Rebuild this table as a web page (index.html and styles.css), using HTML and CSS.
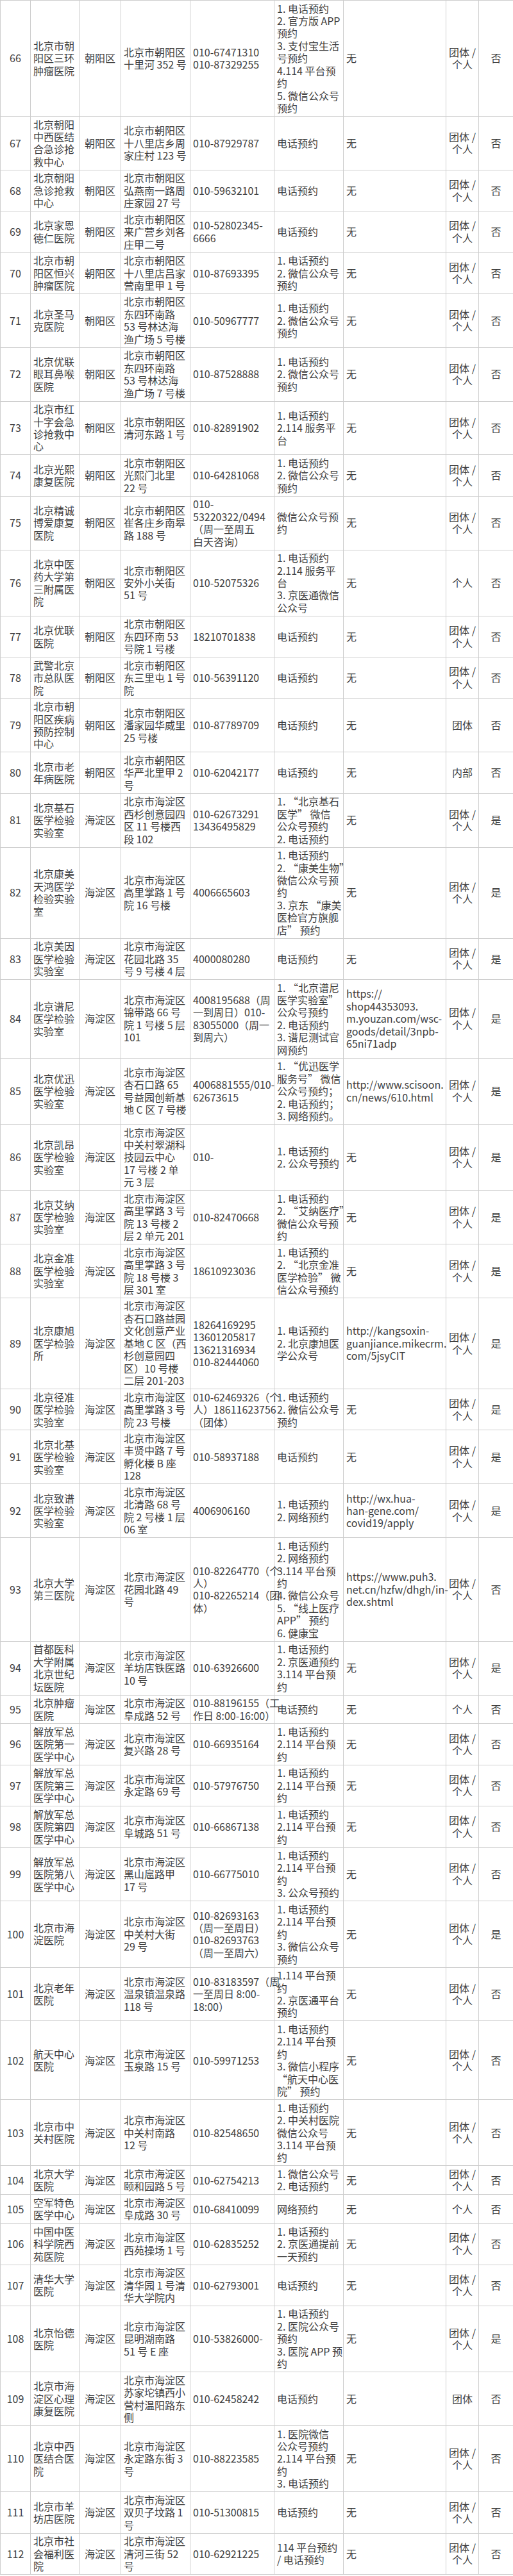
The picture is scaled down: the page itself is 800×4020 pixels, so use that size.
FILE: index.html
```html
<!DOCTYPE html>
<html lang="zh-CN">
<head>
<meta charset="utf-8">
<title>核酸检测机构列表</title>
<link rel="stylesheet" href="styles.css">
</head>
<body>
<table class="tbl">
<colgroup>
<col class="w-no"><col class="w-name"><col class="w-dist"><col class="w-addr"><col class="w-tel"><col class="w-book"><col class="w-web"><col class="w-grp"><col class="w-yn">
</colgroup>
<tbody>
<tr><td class="c">66</td><td>北京市朝<br>阳区三环<br>肿瘤医院</td><td class="c">朝阳区</td><td>北京市朝阳区<br>十里河 352 号</td><td>010-67471310<br>010-87329255</td><td>1. 电话预约<br>2. 官方版 APP<br>预约<br>3. 支付宝生活<br>号预约<br>4.114 平台预<br>约<br>5. 微信公众号<br>预约</td><td>无</td><td class="c">团体 /<br>个人</td><td class="c">否</td></tr>
<tr><td class="c">67</td><td>北京朝阳<br>中西医结<br>合急诊抢<br>救中心</td><td class="c">朝阳区</td><td>北京市朝阳区<br>十八里店乡周<br>家庄村 123 号</td><td>010-87929787</td><td>电话预约</td><td>无</td><td class="c">团体 /<br>个人</td><td class="c">否</td></tr>
<tr><td class="c">68</td><td>北京朝阳<br>急诊抢救<br>中心</td><td class="c">朝阳区</td><td>北京市朝阳区<br>弘燕南一路周<br>庄家园 27 号</td><td>010-59632101</td><td>电话预约</td><td>无</td><td class="c">团体 /<br>个人</td><td class="c">否</td></tr>
<tr><td class="c">69</td><td>北京家恩<br>德仁医院</td><td class="c">朝阳区</td><td>北京市朝阳区<br>来广营乡刘各<br>庄甲二号</td><td>010-52802345-<br>6666</td><td>电话预约</td><td>无</td><td class="c">团体 /<br>个人</td><td class="c">否</td></tr>
<tr><td class="c">70</td><td>北京市朝<br>阳区恒兴<br>肿瘤医院</td><td class="c">朝阳区</td><td>北京市朝阳区<br>十八里店吕家<br>营南里甲 1 号</td><td>010-87693395</td><td>1. 电话预约<br>2. 微信公众号<br>预约</td><td>无</td><td class="c">团体 /<br>个人</td><td class="c">否</td></tr>
<tr><td class="c">71</td><td>北京圣马<br>克医院</td><td class="c">朝阳区</td><td>北京市朝阳区<br>东四环南路<br>53 号林达海<br>渔广场 5 号楼</td><td>010-50967777</td><td>1. 电话预约<br>2. 微信公众号<br>预约</td><td>无</td><td class="c">团体 /<br>个人</td><td class="c">否</td></tr>
<tr><td class="c">72</td><td>北京优联<br>眼耳鼻喉<br>医院</td><td class="c">朝阳区</td><td>北京市朝阳区<br>东四环南路<br>53 号林达海<br>渔广场 7 号楼</td><td>010-87528888</td><td>1. 电话预约<br>2. 微信公众号<br>预约</td><td>无</td><td class="c">团体 /<br>个人</td><td class="c">否</td></tr>
<tr><td class="c">73</td><td>北京市红<br>十字会急<br>诊抢救中<br>心</td><td class="c">朝阳区</td><td>北京市朝阳区<br>清河东路 1 号</td><td>010-82891902</td><td>1. 电话预约<br>2.114 服务平<br>台</td><td>无</td><td class="c">团体 /<br>个人</td><td class="c">否</td></tr>
<tr><td class="c">74</td><td>北京光熙<br>康复医院</td><td class="c">朝阳区</td><td>北京市朝阳区<br>光熙门北里<br>22 号</td><td>010-64281068</td><td>1. 电话预约<br>2. 微信公众号<br>预约</td><td>无</td><td class="c">团体 /<br>个人</td><td class="c">否</td></tr>
<tr><td class="c">75</td><td>北京精诚<br>博爱康复<br>医院</td><td class="c">朝阳区</td><td>北京市朝阳区<br>崔各庄乡南皋<br>路 188 号</td><td>010-<br>53220322/0494<br>（周一至周五<br>白天咨询）</td><td>微信公众号预<br>约</td><td>无</td><td class="c">团体 /<br>个人</td><td class="c">否</td></tr>
<tr><td class="c">76</td><td>北京中医<br>药大学第<br>三附属医<br>院</td><td class="c">朝阳区</td><td>北京市朝阳区<br>安外小关街<br>51 号</td><td>010-52075326</td><td>1. 电话预约<br>2.114 服务平<br>台<br>3. 京医通微信<br>公众号</td><td>无</td><td class="c">个人</td><td class="c">否</td></tr>
<tr><td class="c">77</td><td>北京优联<br>医院</td><td class="c">朝阳区</td><td>北京市朝阳区<br>东四环南 53<br>号院 1 号楼</td><td>18210701838</td><td>电话预约</td><td>无</td><td class="c">团体 /<br>个人</td><td class="c">否</td></tr>
<tr><td class="c">78</td><td>武警北京<br>市总队医<br>院</td><td class="c">朝阳区</td><td>北京市朝阳区<br>东三里屯 1 号<br>院</td><td>010-56391120</td><td>电话预约</td><td>无</td><td class="c">团体 /<br>个人</td><td class="c">否</td></tr>
<tr><td class="c">79</td><td>北京市朝<br>阳区疾病<br>预防控制<br>中心</td><td class="c">朝阳区</td><td>北京市朝阳区<br>潘家园华威里<br>25 号楼</td><td>010-87789709</td><td>电话预约</td><td>无</td><td class="c">团体</td><td class="c">否</td></tr>
<tr><td class="c">80</td><td>北京市老<br>年病医院</td><td class="c">朝阳区</td><td>北京市朝阳区<br>华严北里甲 2<br>号</td><td>010-62042177</td><td>电话预约</td><td>无</td><td class="c">内部</td><td class="c">否</td></tr>
<tr><td class="c">81</td><td>北京基石<br>医学检验<br>实验室</td><td class="c">海淀区</td><td>北京市海淀区<br>西杉创意园四<br>区 11 号楼西<br>段 102</td><td>010-62673291<br>13436495829</td><td>1. “北京基石<br>医学” 微信<br>公众号预约<br>2. 电话预约</td><td>无</td><td class="c">团体 /<br>个人</td><td class="c">是</td></tr>
<tr><td class="c">82</td><td>北京康美<br>天鸿医学<br>检验实验<br>室</td><td class="c">海淀区</td><td>北京市海淀区<br>高里掌路 1 号<br>院 16 号楼</td><td>4006665603</td><td>1. 电话预约<br>2. “康美生物”<br>微信公众号预<br>约<br>3. 京东 “康美<br>医检官方旗舰<br>店” 预约</td><td>无</td><td class="c">团体 /<br>个人</td><td class="c">是</td></tr>
<tr><td class="c">83</td><td>北京美因<br>医学检验<br>实验室</td><td class="c">海淀区</td><td>北京市海淀区<br>花园北路 35<br>号 9 号楼 4 层</td><td>4000080280</td><td>电话预约</td><td>无</td><td class="c">团体 /<br>个人</td><td class="c">是</td></tr>
<tr><td class="c">84</td><td>北京谱尼<br>医学检验<br>实验室</td><td class="c">海淀区</td><td>北京市海淀区<br>锦带路 66 号<br>院 1 号楼 5 层<br>101</td><td>4008195688（周<br>一到周日）010-<br>83055000（周一<br>到周六）</td><td>1. “北京谱尼<br>医学实验室”<br>公众号预约<br>2. 电话预约<br>3. 谱尼测试官<br>网预约</td><td>https://<br>shop44353093.<br>m.youzan.com/wsc-<br>goods/detail/3npb-<br>65ni71adp</td><td class="c">团体 /<br>个人</td><td class="c">是</td></tr>
<tr><td class="c">85</td><td>北京优迅<br>医学检验<br>实验室</td><td class="c">海淀区</td><td>北京市海淀区<br>杏石口路 65<br>号益园创新基<br>地 C 区 7 号楼</td><td>4006881555/010-<br>62673615</td><td>1. “优迅医学<br>服务号” 微信<br>公众号预约；<br>2. 电话预约；<br>3. 网络预约。</td><td>http://www.scisoon.<br>cn/news/610.html</td><td class="c">团体 /<br>个人</td><td class="c">是</td></tr>
<tr><td class="c">86</td><td>北京凯昂<br>医学检验<br>实验室</td><td class="c">海淀区</td><td>北京市海淀区<br>中关村翠湖科<br>技园云中心<br>17 号楼 2 单<br>元 3 层</td><td>010-</td><td>1. 电话预约<br>2. 公众号预约</td><td>无</td><td class="c">团体 /<br>个人</td><td class="c">是</td></tr>
<tr><td class="c">87</td><td>北京艾纳<br>医学检验<br>实验室</td><td class="c">海淀区</td><td>北京市海淀区<br>高里掌路 3 号<br>院 13 号楼 2<br>层 2 单元 201</td><td>010-82470668</td><td>1. 电话预约<br>2. “艾纳医疗”<br>微信公众号预<br>约</td><td>无</td><td class="c">团体 /<br>个人</td><td class="c">是</td></tr>
<tr><td class="c">88</td><td>北京金准<br>医学检验<br>实验室</td><td class="c">海淀区</td><td>北京市海淀区<br>高里掌路 3 号<br>院 18 号楼 3<br>层 301 室</td><td>18610923036</td><td>1. 电话预约<br>2. “北京金准<br>医学检验” 微<br>信公众号预约</td><td>无</td><td class="c">团体 /<br>个人</td><td class="c">是</td></tr>
<tr><td class="c">89</td><td>北京康旭<br>医学检验<br>所</td><td class="c">海淀区</td><td>北京市海淀区<br>杏石口路益园<br>文化创意产业<br>基地 C 区（西<br>杉创意园四<br>区）10 号楼<br>二层 201-203</td><td>18264169295<br>13601205817<br>13621316934<br>010-82444060</td><td>1. 电话预约<br>2. 北京康旭医<br>学公众号</td><td>http://kangsoxin-<br>guanjiance.mikecrm.<br>com/5jsyCIT</td><td class="c">团体 /<br>个人</td><td class="c">是</td></tr>
<tr><td class="c">90</td><td>北京径准<br>医学检验<br>实验室</td><td class="c">海淀区</td><td>北京市海淀区<br>高里掌路 3 号<br>院 23 号楼</td><td>010-62469326（个<br>人）18611623756<br>（团体）</td><td>1. 电话预约<br>2. 微信公众号<br>预约</td><td>无</td><td class="c">团体 /<br>个人</td><td class="c">是</td></tr>
<tr><td class="c">91</td><td>北京北基<br>医学检验<br>实验室</td><td class="c">海淀区</td><td>北京市海淀区<br>丰贤中路 7 号<br>孵化楼 B 座<br>128</td><td>010-58937188</td><td>电话预约</td><td>无</td><td class="c">团体 /<br>个人</td><td class="c">是</td></tr>
<tr><td class="c">92</td><td>北京致谱<br>医学检验<br>实验室</td><td class="c">海淀区</td><td>北京市海淀区<br>北清路 68 号<br>院 2 号楼 1 层<br>06 室</td><td>4006906160</td><td>1. 电话预约<br>2. 网络预约</td><td>http://wx.hua-<br>han-gene.com/<br>covid19/apply</td><td class="c">团体 /<br>个人</td><td class="c">是</td></tr>
<tr><td class="c">93</td><td>北京大学<br>第三医院</td><td class="c">海淀区</td><td>北京市海淀区<br>花园北路 49<br>号</td><td>010-82264770（个<br>人）<br>010-82265214（团<br>体）</td><td>1. 电话预约<br>2. 网络预约<br>3.114 平台预<br>约<br>4. 微信公众号<br>5. “线上医疗<br>APP” 预约<br>6. 健康宝</td><td>https://www.puh3.<br>net.cn/hzfw/dhgh/in-<br>dex.shtml</td><td class="c">团体 /<br>个人</td><td class="c">否</td></tr>
<tr><td class="c">94</td><td>首都医科<br>大学附属<br>北京世纪<br>坛医院</td><td class="c">海淀区</td><td>北京市海淀区<br>羊坊店铁医路<br>10 号</td><td>010-63926600</td><td>1. 电话预约<br>2. 京医通预约<br>3.114 平台预<br>约</td><td>无</td><td class="c">团体 /<br>个人</td><td class="c">是</td></tr>
<tr><td class="c">95</td><td>北京肿瘤<br>医院</td><td class="c">海淀区</td><td>北京市海淀区<br>阜成路 52 号</td><td>010-88196155（工<br>作日 8:00-16:00）</td><td>电话预约</td><td>无</td><td class="c">个人</td><td class="c">否</td></tr>
<tr><td class="c">96</td><td>解放军总<br>医院第一<br>医学中心</td><td class="c">海淀区</td><td>北京市海淀区<br>复兴路 28 号</td><td>010-66935164</td><td>1. 电话预约<br>2.114 平台预<br>约</td><td>无</td><td class="c">团体 /<br>个人</td><td class="c">否</td></tr>
<tr><td class="c">97</td><td>解放军总<br>医院第三<br>医学中心</td><td class="c">海淀区</td><td>北京市海淀区<br>永定路 69 号</td><td>010-57976750</td><td>1. 电话预约<br>2.114 平台预<br>约</td><td>无</td><td class="c">团体 /<br>个人</td><td class="c">否</td></tr>
<tr><td class="c">98</td><td>解放军总<br>医院第四<br>医学中心</td><td class="c">海淀区</td><td>北京市海淀区<br>阜城路 51 号</td><td>010-66867138</td><td>1. 电话预约<br>2.114 平台预<br>约</td><td>无</td><td class="c">团体 /<br>个人</td><td class="c">否</td></tr>
<tr><td class="c">99</td><td>解放军总<br>医院第八<br>医学中心</td><td class="c">海淀区</td><td>北京市海淀区<br>黑山扈路甲<br>17 号</td><td>010-66775010</td><td>1. 电话预约<br>2.114 平台预<br>约<br>3. 公众号预约</td><td>无</td><td class="c">团体 /<br>个人</td><td class="c">否</td></tr>
<tr><td class="c">100</td><td>北京市海<br>淀医院</td><td class="c">海淀区</td><td>北京市海淀区<br>中关村大街<br>29 号</td><td>010-82693163<br>（周一至周日）<br>010-82693763<br>（周一至周六）</td><td>1. 电话预约<br>2.114 平台预<br>约<br>3. 微信公众号<br>预约</td><td>无</td><td class="c">团体 /<br>个人</td><td class="c">是</td></tr>
<tr><td class="c">101</td><td>北京老年<br>医院</td><td class="c">海淀区</td><td>北京市海淀区<br>温泉镇温泉路<br>118 号</td><td>010-83183597（周<br>一至周日 8:00-<br>18:00）</td><td>1.114 平台预<br>约<br>2. 京医通平台<br>预约</td><td>无</td><td class="c">团体 /<br>个人</td><td class="c">否</td></tr>
<tr><td class="c">102</td><td>航天中心<br>医院</td><td class="c">海淀区</td><td>北京市海淀区<br>玉泉路 15 号</td><td>010-59971253</td><td>1. 电话预约<br>2.114 平台预<br>约<br>3. 微信小程序<br>“航天中心医<br>院” 预约</td><td>无</td><td class="c">团体 /<br>个人</td><td class="c">否</td></tr>
<tr><td class="c">103</td><td>北京市中<br>关村医院</td><td class="c">海淀区</td><td>北京市海淀区<br>中关村南路<br>12 号</td><td>010-82548650</td><td>1. 电话预约<br>2. 中关村医院<br>微信公众号<br>3.114 平台预<br>约</td><td>无</td><td class="c">团体 /<br>个人</td><td class="c">否</td></tr>
<tr><td class="c">104</td><td>北京大学<br>医院</td><td class="c">海淀区</td><td>北京市海淀区<br>颐和园路 5 号</td><td>010-62754213</td><td>1. 微信公众号<br>2. 电话预约</td><td>无</td><td class="c">团体 /<br>个人</td><td class="c">否</td></tr>
<tr><td class="c">105</td><td>空军特色<br>医学中心</td><td class="c">海淀区</td><td>北京市海淀区<br>阜成路 30 号</td><td>010-68410099</td><td>网络预约</td><td>无</td><td class="c">个人</td><td class="c">否</td></tr>
<tr><td class="c">106</td><td>中国中医<br>科学院西<br>苑医院</td><td class="c">海淀区</td><td>北京市海淀区<br>西苑操场 1 号</td><td>010-62835252</td><td>1. 电话预约<br>2. 京医通提前<br>一天预约</td><td>无</td><td class="c">团体 /<br>个人</td><td class="c">否</td></tr>
<tr><td class="c">107</td><td>清华大学<br>医院</td><td class="c">海淀区</td><td>北京市海淀区<br>清华园 1 号清<br>华大学院内</td><td>010-62793001</td><td>电话预约</td><td>无</td><td class="c">团体 /<br>个人</td><td class="c">否</td></tr>
<tr><td class="c">108</td><td>北京怡德<br>医院</td><td class="c">海淀区</td><td>北京市海淀区<br>昆明湖南路<br>51 号 E 座</td><td>010-53826000-</td><td>1. 电话预约<br>2. 医院公众号<br>预约<br>3. 医院 APP 预<br>约</td><td>无</td><td class="c">团体 /<br>个人</td><td class="c">是</td></tr>
<tr><td class="c">109</td><td>北京市海<br>淀区心理<br>康复医院</td><td class="c">海淀区</td><td>北京市海淀区<br>苏家坨镇西小<br>营村温阳路东<br>侧</td><td>010-62458242</td><td>电话预约</td><td>无</td><td class="c">团体</td><td class="c">否</td></tr>
<tr><td class="c">110</td><td>北京中西<br>医结合医<br>院</td><td class="c">海淀区</td><td>北京市海淀区<br>永定路东街 3<br>号</td><td>010-88223585</td><td>1. 医院微信<br>公众号预约<br>2.114 平台预<br>约<br>3. 电话预约</td><td>无</td><td class="c">团体 /<br>个人</td><td class="c">否</td></tr>
<tr><td class="c">111</td><td>北京市羊<br>坊店医院</td><td class="c">海淀区</td><td>北京市海淀区<br>双贝子坟路 1<br>号</td><td>010-51300815</td><td>电话预约</td><td>无</td><td class="c">团体 /<br>个人</td><td class="c">否</td></tr>
<tr><td class="c">112</td><td>北京市社<br>会福利医<br>院</td><td class="c">海淀区</td><td>北京市海淀区<br>清河三街 52<br>号</td><td>010-62921225</td><td>114 平台预约<br>/ 电话预约</td><td>无</td><td class="c">团体 /<br>个人</td><td class="c">否</td></tr>
</tbody>
</table>
</body>
</html>
```

FILE: styles.css
```css
html, body {
  margin: 0;
  padding: 0;
  background: #ffffff;
}

body {
  font-family: "Noto Sans CJK SC", "Noto Sans", "DejaVu Sans", sans-serif;
  color: #3e3e3e;
}

.tbl {
  width: 800px;
  border-collapse: collapse;
  table-layout: fixed;
  font-size: 16px;
  line-height: 19.45px;
}

.tbl td {
  border: 1px solid #cdcdcd;
  padding: 2.5px 4px;
  vertical-align: middle;
  text-align: left;
  white-space: nowrap;
  overflow: visible;
}

.tbl td.c {
  text-align: center;
  padding-left: 2px;
  padding-right: 2px;
}

.w-no { width: 47px; }
.w-name { width: 76px; }
.w-dist { width: 65px; }
.w-addr { width: 108px; }
.w-tel { width: 131px; }
.w-book { width: 108px; }
.w-web { width: 160px; }
.w-grp { width: 51px; }
.w-yn { width: 54px; }
```
